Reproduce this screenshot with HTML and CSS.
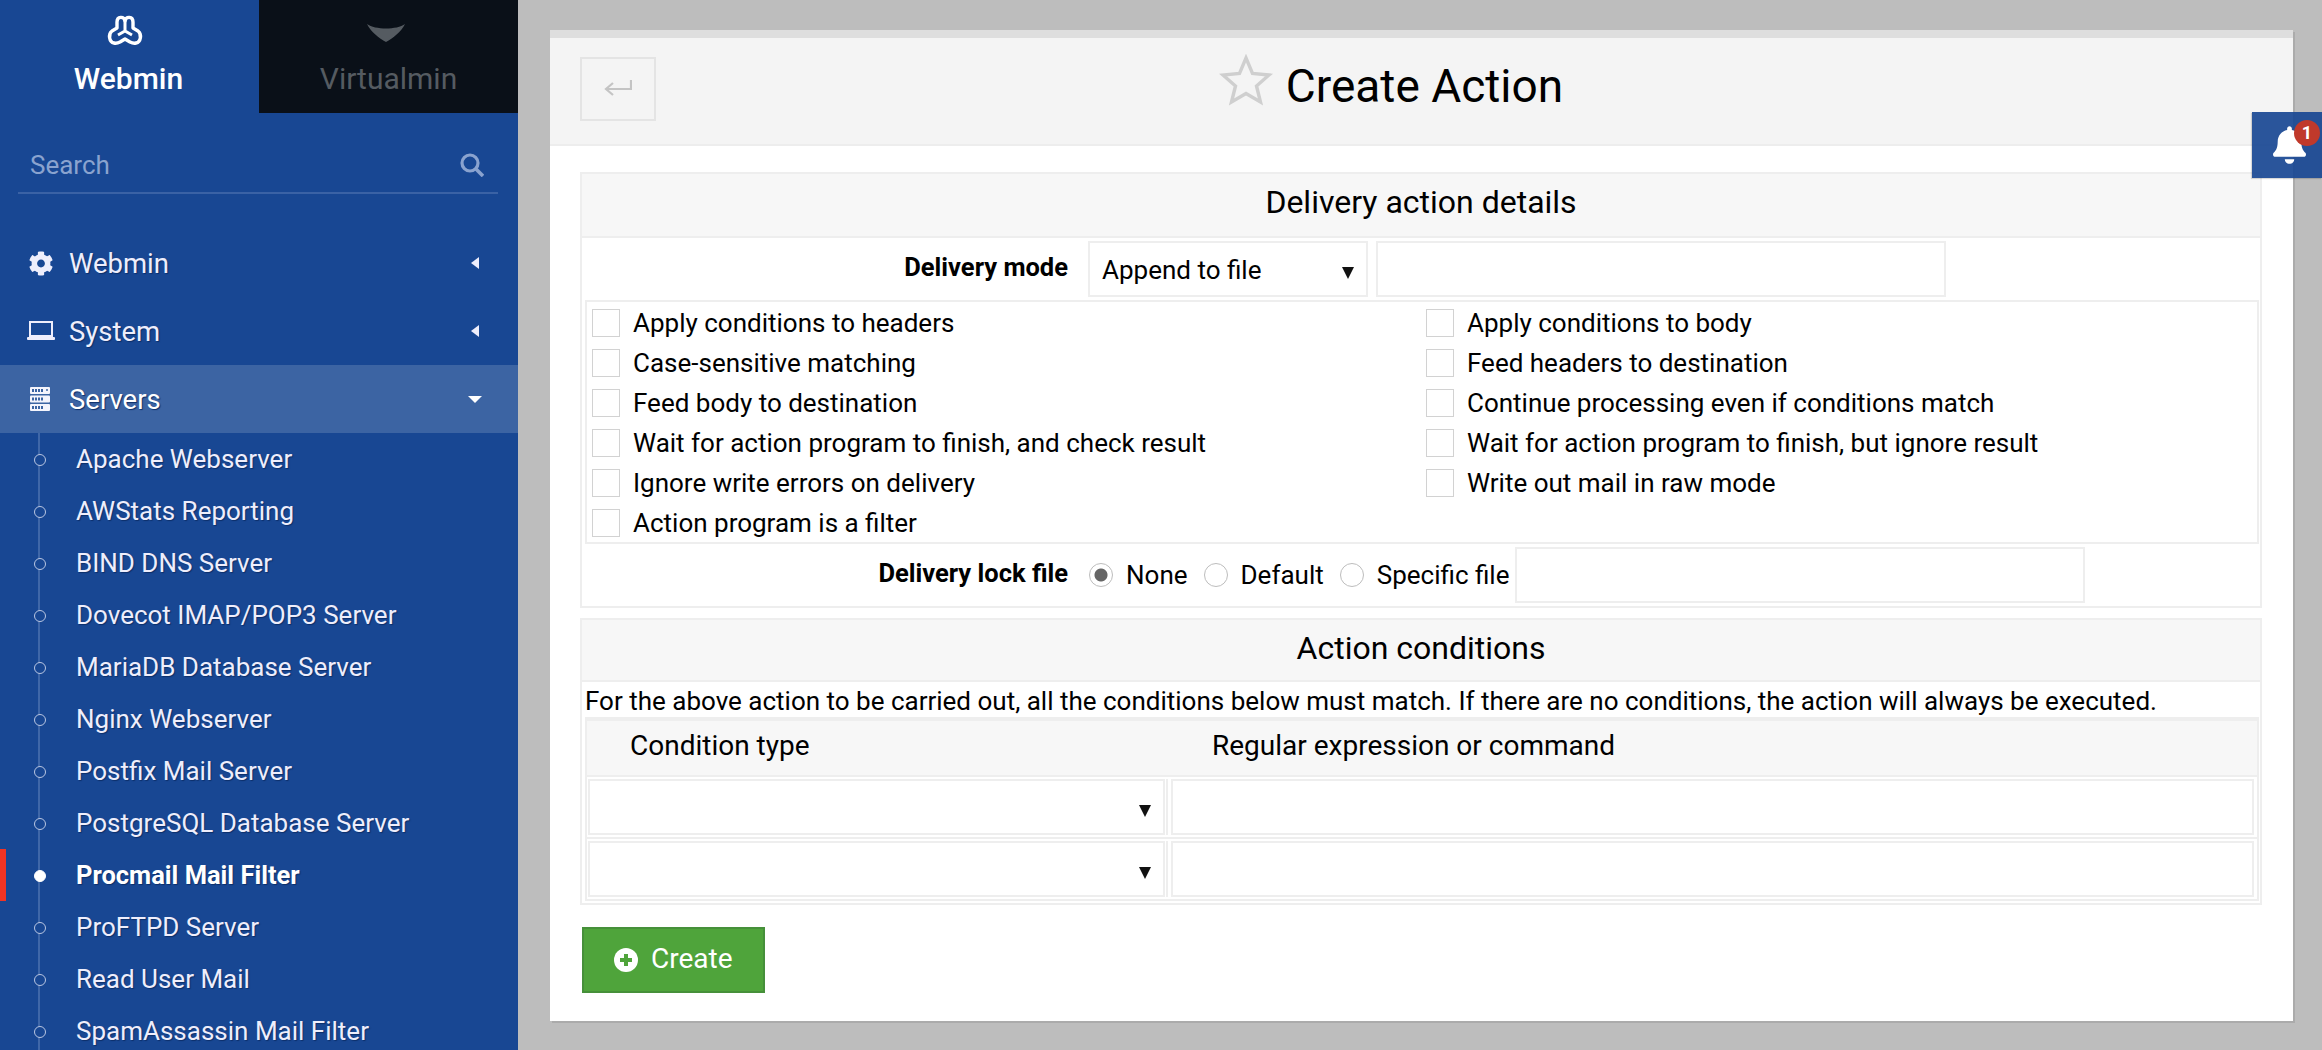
FILE: index.html
```html
<!DOCTYPE html>
<html lang="en">

<head>
    <meta charset="UTF-8">
    <title>Create Action</title>
    <link rel="stylesheet" href="styles.css">
</head>

<body>

    <aside class="sidebar">
        <div class="tabs">
            <div class="tab tab-active">
                <svg class="tab-logo" width="36" height="33" viewBox="-1 -1 36 33">
                    <path d="M9 13V7C9 1 16 1 17 6C18 1 25 1 25 7V13L30 16C34 19 33 27 28 28C26 28.500 24 28 22 27L17 24L12 27C10 28 8 28.500 6 28C1 27 0 19 4 16Z" fill="none" stroke="#fff" stroke-width="3.4" stroke-linejoin="round" />
                    <path d="M17 6V15M10 20L17 16L24 20" fill="none" stroke="#fff" stroke-width="3" />
                </svg>
                <span>Webmin</span>
            </div>
            <div class="tab tab-dark">
                <svg class="tab-logo" width="38" height="33" viewBox="0 0 38 33">
                    <path d="M0 10C8 16 30 16 38 10C34 18 26 24 19 28C12 24 4 18 0 10Z" fill="#555b61" />
                </svg>
                <span>Virtualmin</span>
            </div>
        </div>

        <div class="search">
            <span>Search</span>
            <svg width="24" height="24" viewBox="0 0 24 24">
                <circle cx="10" cy="10" r="8" fill="none" stroke="#8aa3cf" stroke-width="3.2" />
                <path d="M16 16L23 23" stroke="#8aa3cf" stroke-width="3.6" />
            </svg>
        </div>

        <ul class="menu">
            <li class="menu-item">
                <svg class="menu-icon" width="25" height="25" viewBox="0 0 512 512">
                    <path fill="#eeeefc" d="M487.4 315.7l-42.6-24.6c4.3-23.2 4.3-47 0-70.2l42.6-24.6c4.9-2.8 7.1-8.6 5.5-14-11.1-35.6-30-67.8-54.7-94.6-3.8-4.1-10-5.1-14.8-2.3L380.8 110c-17.9-15.4-38.5-27.3-60.8-35.1V25.8c0-5.6-3.9-10.5-9.4-11.7-36.7-8.2-74.3-7.8-109.2 0-5.5 1.2-9.4 6.1-9.4 11.7V75c-22.2 7.9-42.8 19.8-60.8 35.1L88.7 85.5c-4.9-2.8-11-1.9-14.8 2.3-24.7 26.7-43.6 58.9-54.7 94.6-1.7 5.4.6 11.2 5.5 14L67.3 221c-4.3 23.2-4.3 47 0 70.2l-42.6 24.6c-4.9 2.8-7.1 8.6-5.5 14 11.1 35.6 30 67.8 54.7 94.6 3.8 4.1 10 5.1 14.8 2.3l42.6-24.6c17.9 15.4 38.5 27.3 60.8 35.1v49.2c0 5.6 3.9 10.5 9.4 11.7 36.7 8.2 74.3 7.8 109.2 0 5.5-1.2 9.4-6.1 9.4-11.7v-49.2c22.2-7.9 42.8-19.8 60.8-35.1l42.6 24.6c4.9 2.8 11 1.9 14.8-2.3 24.7-26.7 43.6-58.9 54.7-94.6 1.5-5.5-.7-11.3-5.6-14.1zM256 336c-44.1 0-80-35.9-80-80s35.9-80 80-80 80 35.9 80 80-35.9 80-80 80z" />
                </svg>
                <span>Webmin</span>
                <i class="arrow-left"></i>
            </li>
            <li class="menu-item">
                <svg class="menu-icon" width="28" height="20" viewBox="0 0 28 20">
                    <rect x="3" y="1" width="22" height="14" fill="none" stroke="#eeeefc" stroke-width="2" />
                    <rect x="0" y="16" width="28" height="3" rx="1" fill="#eeeefc" />
                </svg>
                <span>System</span>
                <i class="arrow-left"></i>
            </li>
            <li class="menu-item menu-open">
                <svg class="menu-icon" width="28" height="24" viewBox="0 0 28 24">
                    <g fill="#f4f4fc">
                        <rect x="3" y="0" width="20" height="7" rx="1" />
                        <rect x="3" y="8.500" width="20" height="7" rx="1" />
                        <rect x="3" y="17" width="20" height="7" rx="1" />
                    </g>
                    <path d="M5 3.500H17M5 12H17M5 20.500H17" stroke="#3c64a3" stroke-width="3" stroke-dasharray="2 1" />
                    <circle cx="20" cy="3" r="1" fill="#3c64a3" />
                </svg>
                <span>Servers</span>
                <i class="arrow-down"></i>
            </li>
        </ul>

        <ul class="submenu">
            <li>Apache Webserver</li>
            <li>AWStats Reporting</li>
            <li>BIND DNS Server</li>
            <li>Dovecot IMAP/POP3 Server</li>
            <li>MariaDB Database Server</li>
            <li>Nginx Webserver</li>
            <li>Postfix Mail Server</li>
            <li>PostgreSQL Database Server</li>
            <li class="current">Procmail Mail Filter</li>
            <li>ProFTPD Server</li>
            <li>Read User Mail</li>
            <li>SpamAssassin Mail Filter</li>
        </ul>
    </aside>

    <main class="content">
        <div class="panel">
            <header class="panel-head">
                <div class="head-left">
                    <button class="back-btn" type="button">
                        <svg width="28" height="18" viewBox="0 0 28 18">
                            <path d="M27 1V10H3M9 4L2 10L9 16" fill="none" stroke="#c4c4c4" stroke-width="2.2" />
                        </svg>
                    </button>
                    <svg class="star" width="54" height="52" viewBox="0 0 54 52">
                        <path d="M27 4L33.5 19.5L50 21L37.5 32L41.5 48L27 39.5L12.500 48L16.500 32L4 21L20.500 19.500Z" fill="none" stroke="#cfcfcf" stroke-width="3.4" />
                    </svg>
                </div>
                <h1>Create Action</h1>
            </header>

            <div class="panel-body">
                <section class="box">
                    <h2 class="box-title">Delivery action details</h2>

                    <div class="mode-row">
                        <label class="field-label">Delivery mode</label>
                        <div class="select-wrap mode-select">
                            <select>
                                <option>Append to file</option>
                            </select>
                        </div>
                        <input class="text-input mode-input" type="text">
                    </div>

                    <div class="check-grid">
                        <label class="check"><input type="checkbox">Apply conditions to headers</label>
                        <label class="check"><input type="checkbox">Apply conditions to body</label>
                        <label class="check"><input type="checkbox">Case-sensitive matching</label>
                        <label class="check"><input type="checkbox">Feed headers to destination</label>
                        <label class="check"><input type="checkbox">Feed body to destination</label>
                        <label class="check"><input type="checkbox">Continue processing even if conditions match</label>
                        <label class="check"><input type="checkbox">Wait for action program to finish, and check result</label>
                        <label class="check"><input type="checkbox">Wait for action program to finish, but ignore result</label>
                        <label class="check"><input type="checkbox">Ignore write errors on delivery</label>
                        <label class="check"><input type="checkbox">Write out mail in raw mode</label>
                        <label class="check"><input type="checkbox">Action program is a filter</label>
                    </div>

                    <div class="lock-row">
                        <label class="field-label">Delivery lock file</label>
                        <label class="radio"><input type="radio" name="lock" checked>None</label>
                        <label class="radio"><input type="radio" name="lock">Default</label>
                        <label class="radio"><input type="radio" name="lock">Specific file</label>
                        <input class="text-input lock-input" type="text">
                    </div>
                </section>

                <section class="box box-conditions">
                    <h2 class="box-title">Action conditions</h2>
                    <p class="cond-note">For the above action to be carried out, all the conditions below must match. If there are no conditions, the action will always be executed.</p>

                    <div class="cond-table">
                        <div class="cond-head">
                            <span class="cond-type">Condition type</span>
                            <span>Regular expression or command</span>
                        </div>
                        <div class="cond-row">
                            <div class="select-wrap"><select></select></div>
                            <div class="cond-cell"><input class="text-input" type="text"></div>
                        </div>
                        <div class="cond-row">
                            <div class="select-wrap"><select></select></div>
                            <div class="cond-cell"><input class="text-input" type="text"></div>
                        </div>
                    </div>
                </section>

                <button class="create-btn" type="button">
                    <svg width="24" height="24" viewBox="0 0 24 24">
                        <circle cx="12" cy="12" r="12" fill="#fff" />
                        <path d="M12 6V18M6 12H18" stroke="#4fa43b" stroke-width="4" />
                    </svg>
                    Create
                </button>
            </div>
        </div>
    </main>

    <div class="notify">
        <svg width="33" height="38" viewBox="0 0 448 512">
            <path fill="#fff" d="M224 512c35.32 0 63.97-28.65 63.97-64H160.03c0 35.35 28.65 64 63.97 64zm215.39-149.71c-19.32-20.76-55.47-51.99-55.47-154.29 0-77.7-54.48-139.9-127.94-155.16V32c0-17.67-14.32-32-31.98-32s-31.98 14.33-31.98 32v20.84C118.56 68.1 64.08 130.3 64.08 208c0 102.3-36.15 133.53-55.47 154.29-6 6.45-8.66 14.16-8.61 21.71.11 16.4 12.98 32 32.1 32h383.8c19.12 0 32-15.6 32.1-32 .05-7.55-2.61-15.27-8.61-21.71z" />
        </svg>
        <span class="badge">1</span>
    </div>

</body>

</html>
```

FILE: styles.css
```css
* {
    box-sizing: border-box;
}

html,
body {
    height: 100%;
}

body {
    margin: 0;
    display: flex;
    height: 1050px;
    overflow: hidden;
    font-family: Roboto, "Liberation Sans", sans-serif;
    font-size: 26px;
    color: #000;
    background-color: #bdbdbd;
}

ul {
    list-style: none;
    margin: 0;
    padding: 0;
}

/* sidebar */
.sidebar {
    width: 518px;
    height: 1050px;
    flex-shrink: 0;
    overflow: hidden;
    background-color: #184793;
    color: #eeeefc;
}

.tabs {
    display: flex;
    height: 113px;
}

.tab {
    width: 50%;
    display: flex;
    flex-direction: column;
    align-items: center;
    padding-top: 14px;
    font-size: 30px;
}

.tab-logo {
    display: block;
    height: 33px;
    margin-bottom: 14px;
}

.tab-active {
    color: #fff;
    font-weight: 500;
    padding-right: 2px;
}

.tab-active .tab-logo {
    margin-right: 8px;
}

.tab-dark {
    background-color: #0a1018;
    color: #555b61;
}

.tab-dark .tab-logo {
    margin-right: 6px;
}

.search {
    display: flex;
    align-items: center;
    justify-content: space-between;
    height: 48px;
    margin: 33px 20px 35px 18px;
    padding: 0 14px 8px 12px;
    border-bottom: 2px solid #3a62a5;
    color: #8aa3cf;
    font-size: 26px;
}

.menu-item {
    display: flex;
    align-items: center;
    height: 68px;
    padding: 0 39px 0 27px;
    font-size: 27.5px;
    text-shadow: 1px 1px 1px #0d2f6a;
}

.menu-icon {
    width: 28px;
    margin-right: 14px;
}

.menu-open {
    background-color: #3c64a3;
    color: #fff;
}

.arrow-left,
.arrow-down {
    margin-left: auto;
    width: 0;
    height: 0;
}

.arrow-left {
    border-top: 6px solid transparent;
    border-bottom: 6px solid transparent;
    border-right: 8px solid #eeeefc;
}

.arrow-down {
    margin-right: -3px;
    border-left: 7px solid transparent;
    border-right: 7px solid transparent;
    border-top: 7px solid #fff;
}

.submenu {
    position: relative;
}

.submenu li {
    position: relative;
    height: 52px;
    line-height: 53px;
    padding-left: 76px;
    font-size: 26px;
    text-shadow: 1px 1px 1px #0d2f6a;
}

/* the dotted guide line that runs down the submenu */
.submenu li::before {
    content: "";
    position: absolute;
    left: 38px;
    top: 0;
    bottom: 0;
    width: 2px;
    background-color: #3f67a8;
}

.submenu li::after {
    content: "";
    position: absolute;
    left: 34px;
    top: 21px;
    width: 10px;
    height: 10px;
    border: 1.5px solid #b9c6e2;
    border-radius: 50%;
    background-color: #184793;
}

.submenu .current {
    color: #fff;
    font-weight: 700;
    font-size: 25.5px;
    box-shadow: inset 6px 0 0 #f03424;
}

.submenu .current::after {
    background-color: #fff;
    border-color: #fff;
}

/* main panel */
.content {
    flex: 1;
    padding: 30px 29px 0 32px;
}

.panel {
    height: 991px;
    border-top: 8px solid #dedede;
    background-color: #fff;
    box-shadow: 2px 2px 0 #ababab;
}

.panel-head {
    display: grid;
    grid-template-columns: 1fr auto 1fr;
    align-items: center;
    height: 108px;
    border-bottom: 2px solid #ededed;
    background-color: #f4f4f4;
}

.head-left {
    display: flex;
    align-items: center;
    padding-left: 30px;
}

.back-btn {
    width: 76px;
    height: 64px;
    margin-top: -4px;
    padding: 0;
    border: 2px solid #e4e4e4;
    background: transparent;
}

.star {
    margin-left: auto;
    margin-right: 7px;
    margin-top: -22px;
}

.panel-head h1 {
    margin: -10px 0 0;
    padding-left: 6px;
    font-size: 46px;
    font-weight: 400;
}

.panel-body {
    padding: 26px 31px 0 30px;
}

.box {
    border: 2px solid #eee;
}

.box-conditions {
    margin-top: 10px;
    padding-bottom: 2px;
}

.box-title {
    margin: 0;
    height: 64px;
    line-height: 56px;
    border-bottom: 2px solid #eee;
    background-color: #f7f7f7;
    font-size: 32px;
    font-weight: 400;
    text-align: center;
}

.box-conditions .box-title {
    height: 62px;
}

.mode-row {
    display: flex;
    align-items: center;
    height: 62px;
}

.field-label {
    width: 486px;
    text-align: right;
    font-size: 25.5px;
    font-weight: 700;
    flex-shrink: 0;
    margin-top: -4px;
}

.select-wrap {
    position: relative;
    height: 56px;
    border: 2px solid #eee;
    background-color: #fff;
}

.select-wrap::after {
    content: "";
    position: absolute;
    right: 12px;
    top: 24px;
    border-left: 6px solid transparent;
    border-right: 6px solid transparent;
    border-top: 12px solid #111;
}

.select-wrap select {
    width: 100%;
    height: 100%;
    padding: 2px 12px 0;
    border: 0;
    outline: 0;
    font: inherit;
    background: transparent;
    appearance: none;
}

.text-input {
    display: block;
    width: 100%;
    height: 56px;
    border: 2px solid #eee;
    background-color: #fff;
    outline: 0;
}

.mode-select {
    width: 280px;
    margin-left: 20px;
}

.mode-input {
    width: 570px;
    margin-left: 8px;
}

.check-grid {
    display: grid;
    grid-template-columns: 834px 1fr;
    grid-auto-rows: 40px;
    height: 244px;
    margin: 0 1px 0 3px;
    padding: 1px 5px 0;
    border: 2px solid #eee;
}

.check {
    display: flex;
    align-items: center;
}

.check input {
    appearance: none;
    width: 28px;
    height: 28px;
    margin: 0 13px 0 0;
    border: 1.5px solid #d2d2d2;
    background-color: #fff;
}

.lock-row {
    display: flex;
    align-items: center;
    height: 62px;
}

.radio {
    display: flex;
    align-items: center;
    margin-top: -1px;
    margin-left: 21px;
}

.radio + .radio {
    margin-left: 16px;
}

.radio input {
    appearance: none;
    width: 24px;
    height: 24px;
    margin: 0 13px 0 0;
    border: 1.5px solid #bdbdbd;
    border-radius: 50%;
    background-color: #fff;
}

.radio input:checked {
    background: radial-gradient(circle, #666 0, #666 6px, #fff 7px);
}

.lock-input {
    width: 570px;
    margin-left: 6px;
}

.cond-note {
    margin: 0;
    height: 35px;
    line-height: 38px;
    padding-left: 3px;
}

.cond-table {
    margin: 0 1px 0 3px;
    border-top: 4px solid #eee;
    border-left: 2px solid #eee;
    border-right: 2px solid #eee;
}

.cond-head {
    display: grid;
    grid-template-columns: 625px 1fr;
    height: 56px;
    line-height: 50px;
    border-bottom: 2px solid #eee;
    background-color: #f7f7f7;
    font-size: 28px;
}

.cond-type {
    padding-left: 43px;
}

.cond-row {
    display: grid;
    grid-template-columns: 577px 1fr;
    padding: 2px 3px 2px 1px;
    border-bottom: 2px solid #eee;
}

.cond-cell {
    margin-left: 1px;
    padding-left: 3px;
    border-left: 2px solid #eee;
}

.create-btn {
    display: flex;
    align-items: center;
    gap: 13px;
    height: 66px;
    width: 183px;
    margin-top: 22px;
    margin-left: 2px;
    padding: 0 0 3px 30px;
    border: 2px solid #46903a;
    background-color: #4fa43b;
    color: #fff;
    font: inherit;
    font-size: 28px;
}

.create-btn svg {
    margin-top: 3px;
}

/* floating notification tab, sits over the panel edge */
.notify {
    position: absolute;
    right: 0;
    top: 112px;
    width: 70px;
    height: 66px;
    background-color: rgba(24, 71, 147, 0.92);
    box-shadow: -1px 1px 1px rgba(0, 0, 0, 0.15);
}

.notify svg {
    position: absolute;
    left: 21px;
    top: 14px;
}

.badge {
    position: absolute;
    left: 42px;
    top: 8px;
    width: 26px;
    height: 26px;
    line-height: 26px;
    border-radius: 50%;
    background-color: #c0392b;
    color: #fff;
    font-size: 18px;
    font-weight: 700;
    text-align: center;
}
```
